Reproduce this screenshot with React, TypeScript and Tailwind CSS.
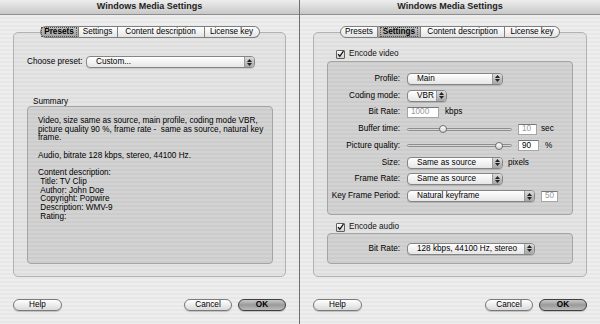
import React from 'react';

const txt = "font-['Liberation_Sans',Arial,sans-serif] text-[8.2px] text-black";

function TitleBar() {
  return (
    <div className="h-[15px] flex items-center justify-center border-b border-[#8e8e8e] bg-gradient-to-b from-[#eeeeee] to-[#c8c8c8] text-[9px] font-bold text-[#1e1e1e]">
      Windows Media Settings
    </div>
  );
}

const TABS = ['Presets', 'Settings', 'Content description', 'License key'];

function Tabs({ active, widths }: { active: number; widths: string[] }) {
  return (
    <div className="relative z-10 flex justify-center">
      {TABS.map((t, i) => (
        <div
          key={t}
          className={`h-[12px] flex items-center justify-center border-y border-r border-[#7f7f7f] ${widths[i]} ${i === 0 ? 'border-l rounded-l-[6px]' : ''} ${i === 3 ? 'rounded-r-[6px]' : ''} ${
            i === active
              ? 'bg-gradient-to-b from-[#c4c4c4] to-[#a2a2a2] font-bold'
              : 'bg-gradient-to-b from-[#ffffff] to-[#e4e4e4]'
          }`}
        >
          <span className={i === active ? 'border border-dotted border-[#555] px-[2px] leading-[8px]' : ''}>{t}</span>
        </div>
      ))}
    </div>
  );
}

function Arrows() {
  return (
    <div className="ml-auto w-[10px] h-full border-l border-[#9a9a9a] rounded-r-[3px] bg-gradient-to-b from-[#dadada] to-[#a6a6a6] flex flex-col items-center justify-center gap-[1px]">
      <svg width="5" height="3" viewBox="0 0 5 3"><path d="M2.5 0L5 3H0z" fill="#222" /></svg>
      <svg width="5" height="3" viewBox="0 0 5 3"><path d="M0 0H5L2.5 3z" fill="#222" /></svg>
    </div>
  );
}

function Popup({ label, className }: { label: string; className: string }) {
  return (
    <div className={`h-[12px] rounded-[4px] border border-[#858585] bg-gradient-to-b from-[#ffffff] to-[#e6e6e6] flex items-center shadow-[0_1px_0_rgba(0,0,0,0.12)] ${className}`}>
      <span className="pl-[9px] whitespace-nowrap">{label}</span>
      <Arrows />
    </div>
  );
}

function Field({ value, className, disabled }: { value: string; className: string; disabled?: boolean }) {
  return (
    <div className={`h-[11px] bg-white border border-[#a6a6a6] border-t-[#777] flex items-center px-[3px] ${disabled ? 'text-[#9a9a9a]' : 'text-black'} ${className}`}>
      {value}
    </div>
  );
}

function Slider({ knob }: { knob: string }) {
  return (
    <div className="relative w-[105px] h-[11px] flex items-center">
      <div className="w-full h-[3px] rounded-full border border-[#8d8d8d] bg-[#d6d6d6]" />
      <div className={`absolute top-[1.5px] w-[8px] h-[8px] rounded-full border border-[#6f6f6f] bg-gradient-to-b from-[#ffffff] to-[#d4d4d4] ${knob}`} />
    </div>
  );
}

function Check({ label }: { label: string }) {
  return (
    <div className="flex items-center h-[10px]">
      <div className="w-[9px] h-[9px] border border-[#5f5f5f] rounded-[1px] bg-gradient-to-b from-[#ffffff] to-[#cfcfcf] flex items-center justify-center">
        <svg width="8" height="8" viewBox="0 0 8 8">
          <path d="M1.2 4.2L3.2 6.6L7.4 0.6" stroke="#111" strokeWidth="1.5" fill="none" />
        </svg>
      </div>
      <span className="ml-[4px] text-[#111]">{label}</span>
    </div>
  );
}

function Button({ label, primary, className }: { label: string; primary?: boolean; className: string }) {
  return (
    <div
      className={`h-[12px] rounded-full border flex items-center justify-center shadow-[0_1px_1px_rgba(0,0,0,0.2)] ${className} ${
        primary
          ? 'border-[#3f3f3f] bg-gradient-to-b from-[#c9c9c9] via-[#9a9a9a] to-[#bcbcbc] font-bold'
          : 'border-[#7a7a7a] bg-gradient-to-b from-[#ffffff] to-[#dadada]'
      }`}
    >
      {label}
    </div>
  );
}

function Row({ label, children }: { label: string; children: React.ReactNode }) {
  return (
    <div className="h-[16.75px] flex items-center">
      <div className="w-[72px] text-right whitespace-nowrap">{label}</div>
      <div className="ml-[7px] flex items-center">{children}</div>
    </div>
  );
}

function Window({ active, widths, children, className }: { active: number; widths: string[]; children: React.ReactNode; className: string }) {
  return (
    <div className={`h-[324px] flex flex-col ${className}`}>
      <TitleBar />
      <div className="flex-1 bg-[repeating-linear-gradient(180deg,#eeeeee_0px,#eeeeee_2px,#e7e7e7_2px,#e7e7e7_4px)] pt-[11px]">
        <div className="mx-[13px]">
          <Tabs active={active} widths={widths} />
          <div className="-mt-[6px] h-[245px] rounded-[5px] border border-[#b2b2b2] bg-[rgba(0,0,0,0.035)]">{children}</div>
        </div>
        <div className="mt-[22px] px-[13px] flex items-center">
          <Button label="Help" className="w-[49px]" />
          <Button label="Cancel" className="ml-auto w-[48px]" />
          <Button label="OK" primary className="ml-[6px] w-[48px]" />
        </div>
      </div>
    </div>
  );
}

export default function App() {
  return (
    <div className={`w-[600px] h-[324px] flex overflow-hidden ${txt}`}>
      <Window active={0} widths={['w-[39px]', 'w-[39px]', 'w-[87px]', 'w-[55px]']} className="w-[299px]">
        <div className="mt-[23px] ml-[13px] flex items-center h-[12px]">
          <div className="w-[59px] whitespace-nowrap">Choose preset:</div>
          <Popup label="Custom..." className="w-[169px]" />
        </div>
        <div className="mt-[29px] ml-[19px] h-[9px] leading-[9px]">Summary</div>
        <div className="ml-[13px] w-[246px] h-[158px] rounded-[4px] border border-[#a4a4a4] bg-[rgba(0,0,0,0.08)] pl-[10px] pt-[10px] leading-[8.7px] whitespace-nowrap">
          <p>Video, size same as source, main profile, coding mode VBR,</p>
          <p>picture quality 90 %, frame rate -&nbsp; same as source, natural key</p>
          <p>frame.</p>
          <p className="mt-[8.7px]">Audio, bitrate 128 kbps, stereo, 44100 Hz.</p>
          <p className="mt-[8.7px]">Content description:</p>
          <p>&nbsp;Title: TV Clip</p>
          <p>&nbsp;Author: John Doe</p>
          <p>&nbsp;Copyright: Popwire</p>
          <p>&nbsp;Description: WMV-9</p>
          <p>&nbsp;Rating:</p>
        </div>
      </Window>
      <div className="w-px h-[324px] bg-[#6f6f6f]" />
      <Window active={1} widths={['w-[38px]', 'w-[43px]', 'w-[84px]', 'w-[55px]']} className="w-[300px]">
        <div className="mt-[16px] ml-[22px]">
          <Check label="Encode video" />
        </div>
        <div className="mt-[2px] ml-[13px] w-[246px] h-[154px] rounded-[4px] border border-[#a4a4a4] bg-[rgba(0,0,0,0.08)] pt-[8.6px]">
          <Row label="Profile:">
            <Popup label="Main" className="w-[96px]" />
          </Row>
          <Row label="Coding mode:">
            <Popup label="VBR" className="w-[40px]" />
          </Row>
          <Row label="Bit Rate:">
            <Field value="1000" className="w-[32px]" disabled />
            <span className="ml-[6px]">kbps</span>
          </Row>
          <Row label="Buffer time:">
            <Slider knob="left-[32px]" />
            <Field value="10" className="ml-[6px] w-[19px]" disabled />
            <span className="ml-[4px]">sec</span>
          </Row>
          <Row label="Picture quality:">
            <Slider knob="left-[88px]" />
            <Field value="90" className="ml-[6px] w-[21px]" />
            <span className="ml-[6px]">%</span>
          </Row>
          <Row label="Size:">
            <Popup label="Same as source" className="w-[96px]" />
            <span className="ml-[5px]">pixels</span>
          </Row>
          <Row label="Frame Rate:">
            <Popup label="Same as source" className="w-[96px]" />
          </Row>
          <Row label="Key Frame Period:">
            <Popup label="Natural keyframe" className="w-[128px]" />
            <Field value="50" className="ml-[6px] w-[17px]" disabled />
          </Row>
        </div>
        <div className="mt-[7px] ml-[22px]">
          <Check label="Encode audio" />
        </div>
        <div className="mt-[1px] ml-[13px] w-[246px] h-[31px] rounded-[4px] border border-[#a4a4a4] bg-[rgba(0,0,0,0.08)] pt-[6.5px]">
          <Row label="Bit Rate:">
            <Popup label="128 kbps, 44100 Hz, stereo" className="w-[128px]" />
          </Row>
        </div>
      </Window>
    </div>
  );
}
